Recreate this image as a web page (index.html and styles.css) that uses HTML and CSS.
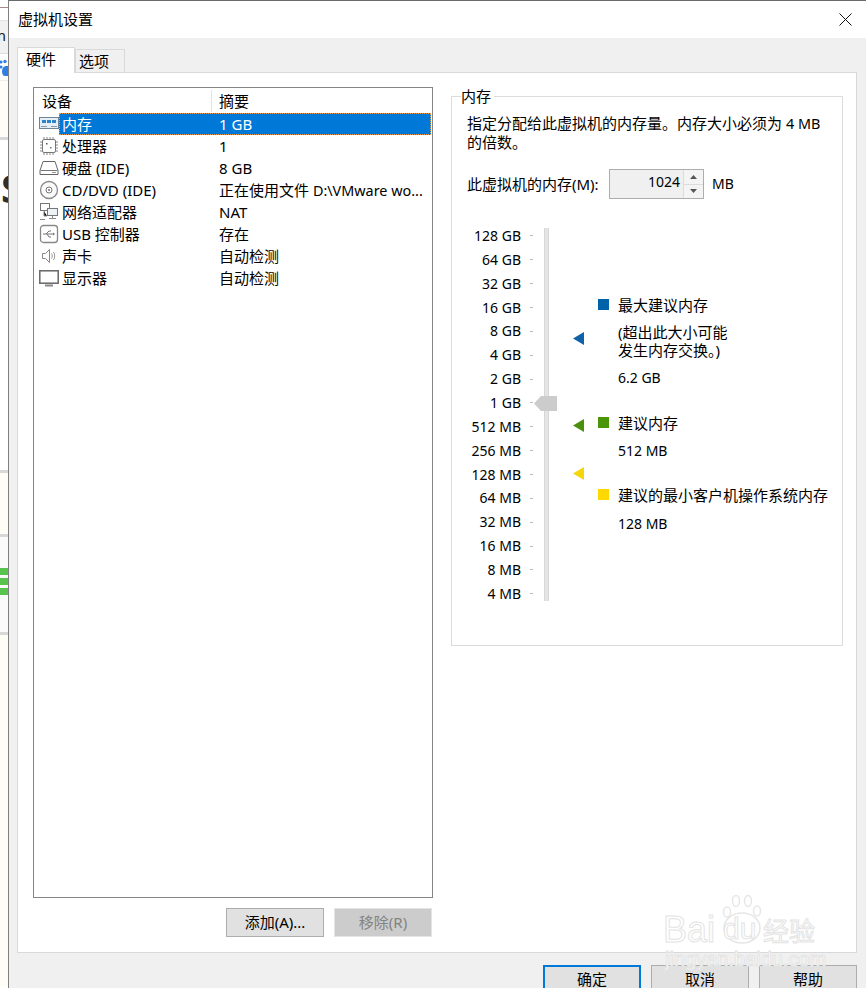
FILE: index.html
```html
<!DOCTYPE html>
<html lang="zh-CN">
<head>
<meta charset="utf-8">
<title>虚拟机设置</title>
<link rel="stylesheet" href="styles.css">
</head>
<body>
<div class="strip">
  <div class="s s-top"></div>
  <div class="s s-bar"><span class="frag-m">m</span></div>
  <div class="s s-paw"><svg width="8" height="18" viewBox="0 0 8 18"><g fill="#2f7fe0"><circle cx="1" cy="3" r="1.6"/><circle cx="5" cy="2.5" r="1.7"/><circle cx="1" cy="8" r="1.6"/><path d="M2 12c0-3 2-5 4-5h2v10H5c-2 0-3-2-3-5z"/></g></svg></div>
  <div class="s s-cream1"></div>
  <div class="s s-white1"><span class="frag-s">S</span></div>
  <div class="s s-cream2"></div>
  <div class="s s-white2"></div>
  <div class="s s-green"><i></i><i></i><i></i></div>
  <div class="s s-white3"></div>
  <div class="s s-cream3"></div>
</div>

<div class="dialog">
  <header class="titlebar">
    <span class="title">虚拟机设置</span>
    <svg class="close" width="13" height="13" viewBox="0 0 13 13"><path d="M.5.5l12 12M12.5.5l-12 12" stroke="#111" fill="none"/></svg>
  </header>

  <main class="body">
    <nav class="tabs">
      <div class="tab tab-on">硬件</div>
      <div class="tab">选项</div>
    </nav>

    <section class="panel">
      <div class="left">
        <div class="listbox">
          <div class="list-head">
            <div class="lh lh-a">设备</div>
            <div class="lh lh-b">摘要</div>
          </div>
          <div class="row row-sel">
            <svg class="ico" viewBox="0 0 20 20"><rect x=".5" y="3.5" width="19" height="11" fill="#e4eef6" stroke="#6f8394"/><rect x="3" y="6" width="4" height="3" fill="#2f83c9"/><rect x="8" y="6" width="4" height="3" fill="#2f83c9"/><rect x="13" y="6" width="4" height="3" fill="#2f83c9"/><path d="M2 12.5h6M12 12.5h6" stroke="#8b9aa6"/></svg>
            <span class="name">内存</span><span class="val">1 GB</span>
          </div>
          <div class="row">
            <svg class="ico" viewBox="0 0 20 20"><rect x="3.5" y="3.5" width="13" height="13" rx="1.5" fill="#fff" stroke="#777"/><path d="M5 1v2M8 1v2M11 1v2M14 1v2M5 17v2M8 17v2M11 17v2M14 17v2M1 6h2M1 9h2M1 12h2M1 15h2M17 6h2M17 9h2M17 12h2M17 15h2" stroke="#888"/><rect x="7" y="7" width="1.5" height="1.5" fill="#555"/><rect x="11" y="11" width="1.5" height="1.5" fill="#777"/></svg>
            <span class="name">处理器</span><span class="val">1</span>
          </div>
          <div class="row">
            <svg class="ico" viewBox="0 0 20 20"><path d="M4 3.5h12l3 9v4H1v-4z" fill="#fff" stroke="#666"/><path d="M1.500 12.500h17" stroke="#777"/><path d="M13 14.500h4" stroke="#999"/></svg>
            <span class="name">硬盘 (IDE)</span><span class="val">8 GB</span>
          </div>
          <div class="row">
            <svg class="ico" viewBox="0 0 20 20"><circle cx="10" cy="10" r="8.500" fill="#fafafa" stroke="#888" stroke-width="1.300"/><circle cx="10" cy="10" r="3" fill="#fff" stroke="#777"/><circle cx="10" cy="10" r="1" fill="#777"/></svg>
            <span class="name">CD/DVD (IDE)</span><span class="val">正在使用文件 <span class="lat">D:\VMware wo...</span></span>
          </div>
          <div class="row">
            <svg class="ico" viewBox="0 0 20 20"><rect x="1.500" y="1.500" width="9" height="7" fill="#fff" stroke="#777"/><rect x="8.500" y="6.500" width="10" height="7" fill="#eef2f5" stroke="#777"/><path d="M13.500 14v2M10 16.500h7M5 9v5h3M1 17.500h5" stroke="#888"/></svg>
            <span class="name">网络适配器</span><span class="val">NAT</span>
          </div>
          <div class="row">
            <svg class="ico" viewBox="0 0 20 20"><rect x="1.500" y="1.500" width="17" height="17" rx="3" fill="#fff" stroke="#888" stroke-width="1.300"/><path d="M4 10h11M7 10l3-3h2M8 10l2 3h2" stroke="#777" fill="none"/><path d="M16 10l-2-1.500v3z" fill="#777"/></svg>
            <span class="name">USB 控制器</span><span class="val">存在</span>
          </div>
          <div class="row">
            <svg class="ico" viewBox="0 0 20 20"><path d="M3.500 7.500h3l4-4v13l-4-4h-3z" fill="#fff" stroke="#888"/><path d="M12.500 7.500c1 1.500 1 3.500 0 5M14.500 6c1.600 2.500 1.600 5.500 0 8" stroke="#999" fill="none"/></svg>
            <span class="name">声卡</span><span class="val">自动检测</span>
          </div>
          <div class="row">
            <svg class="ico" viewBox="0 0 20 20"><rect x=".8" y="2.800" width="18.400" height="12.400" fill="#fff" stroke="#666" stroke-width="1.500"/><path d="M6 17.500h8" stroke="#888" stroke-width="2"/></svg>
            <span class="name">显示器</span><span class="val">自动检测</span>
          </div>
        </div>
        <div class="list-actions">
          <button class="btn">添加(A)...</button>
          <button class="btn btn-off">移除(R)</button>
        </div>
      </div>

      <fieldset class="group">
        <legend class="group-title">内存</legend>
        <p class="desc">指定分配给此虚拟机的内存量。内存大小必须为 <span class="lat">4 MB</span><br>的倍数。</p>
        <div class="mem-line">
          <label class="mem-label">此虚拟机的内存(M):</label>
          <div class="spin">
            <span class="spin-val">1024</span>
            <span class="spin-btns">
              <span class="spin-btn"><svg width="7" height="4" viewBox="0 0 7 4"><path d="M3.500 0L7 4H0z" fill="#555"/></svg></span>
              <span class="spin-btn"><svg width="7" height="4" viewBox="0 0 7 4"><path d="M3.500 4L7 0H0z" fill="#555"/></svg></span>
            </span>
          </div>
          <span class="mem-unit">MB</span>
        </div>
        <div class="scale">
          <div class="ticks">
            <div class="tick"><span>128 GB</span><i></i></div>
            <div class="tick"><span>64 GB</span><i></i></div>
            <div class="tick"><span>32 GB</span><i></i></div>
            <div class="tick"><span>16 GB</span><i></i></div>
            <div class="tick"><span>8 GB</span><i></i></div>
            <div class="tick"><span>4 GB</span><i></i></div>
            <div class="tick"><span>2 GB</span><i></i></div>
            <div class="tick"><span>1 GB</span><i></i></div>
            <div class="tick"><span>512 MB</span><i></i></div>
            <div class="tick"><span>256 MB</span><i></i></div>
            <div class="tick"><span>128 MB</span><i></i></div>
            <div class="tick"><span>64 MB</span><i></i></div>
            <div class="tick"><span>32 MB</span><i></i></div>
            <div class="tick"><span>16 MB</span><i></i></div>
            <div class="tick"><span>8 MB</span><i></i></div>
            <div class="tick"><span>4 MB</span><i></i></div>
          </div>
          <div class="slider">
            <div class="track"></div>
            <svg class="thumb" width="23" height="15" viewBox="0 0 23 15"><path d="M0 7.500L7 0h16v15H7z" fill="#cccccc"/></svg>
            <svg class="mark mark-blue" width="11" height="13" viewBox="0 0 11 13"><path d="M0 6.500L11 0v13z" fill="#0f62a8"/></svg>
            <svg class="mark mark-green" width="11" height="13" viewBox="0 0 11 13"><path d="M0 6.500L11 0v13z" fill="#4a9110"/></svg>
            <svg class="mark mark-yellow" width="11" height="13" viewBox="0 0 11 13"><path d="M0 6.500L11 0v13z" fill="#f5d60c"/></svg>
          </div>
          <div class="legend">
            <div class="leg leg-max">
              <i class="sw sw-blue"></i>
              <div class="leg-text">
                <p class="lg-h">最大建议内存</p>
                <p class="lg-n">(超出此大小可能<br>发生内存交换。)</p>
                <p class="lg-v">6.2 GB</p>
              </div>
            </div>
            <div class="leg leg-rec">
              <i class="sw sw-green"></i>
              <div class="leg-text">
                <p class="lg-h">建议内存</p>
                <p class="lg-v">512 MB</p>
              </div>
            </div>
            <div class="leg leg-min">
              <i class="sw sw-yellow"></i>
              <div class="leg-text">
                <p class="lg-h">建议的最小客户机操作系统内存</p>
                <p class="lg-v">128 MB</p>
              </div>
            </div>
          </div>
        </div>
      </fieldset>
    </section>

    <footer class="foot">
      <button class="btn btn-main">确定</button>
      <button class="btn">取消</button>
      <button class="btn">帮助</button>
    </footer>
  </main>
</div>

<div class="wm">
  <svg class="wm-paw" width="40" height="50" viewBox="0 0 40 50"><g fill="#fff" stroke="#e6e6e6" stroke-width="1.500"><ellipse cx="5" cy="17" rx="3.500" ry="5"/><ellipse cx="14" cy="6" rx="3.500" ry="5.500"/><ellipse cx="26" cy="6" rx="3.500" ry="5.500"/><ellipse cx="35" cy="16" rx="3.500" ry="5"/><ellipse cx="20" cy="33" rx="18" ry="15"/></g></svg>
  <span class="wm-bai">Bai</span>
  <span class="wm-du">du</span>
  <span class="wm-jy">经验</span>
  <span class="wm-url">jingyan.baidu.com</span>
</div>
</body>
</html>
```

FILE: styles.css
```css
* { box-sizing: border-box; }
html, body { margin: 0; height: 988px; overflow: hidden; }
body {
  position: relative;
  display: flex;
  width: 866px;
  background: #fff;
  color: #000;
  font: 15px/18px "Noto Sans", "Noto Sans CJK SC", sans-serif;
}
p { margin: 0; }
i { display: block; }
.lat { font-size: 14.4px; }

/* window behind the dialog */
.strip { width: 8px; flex: none; overflow: hidden; display: flex; flex-direction: column; }
.s { flex: none; position: relative; overflow: hidden; }
.s-top { height: 21px; background: linear-gradient(#fff 7px, #a88 7px, #a88 8px, #fff 8px); border-bottom: 1px solid #e3e3e3; }
.s-bar { height: 33px; background: #f1f1f1; border-bottom: 1px solid #ddd; }
.frag-m { position: absolute; left: -8px; top: 5px; font-size: 15px; color: #222; }
.s-paw { height: 27px; background: #fff; padding-top: 5px; border-bottom: 1px solid #eee; }
.s-paw svg { display: block; }
.s-cream1 { height: 59px; background: #fffef6; border-bottom: 3px solid #d8d8d8; }
.s-white1 { height: 330px; background: #fff; }
.frag-s { position: absolute; left: 1px; top: 23px; font: 700 40px/50px "Noto Sans", sans-serif; color: #2e2e2e; }
.s-cream2 { height: 67px; background: #fffef6; border-top: 3px solid #d8d8d8; border-bottom: 3px solid #d8d8d8; }
.s-white2 { height: 31px; background: #fbfbfb; }
.s-green { height: 29px; background: #fbfbfb; display: flex; flex-direction: column; gap: 3px; }
.s-green i { height: 7px; background: #58c44f; }
.s-white3 { height: 38px; background: #fbfbfb; border-bottom: 3px solid #d8d8d8; }
.s-cream3 { height: 352px; background: #fffef6; }

/* dialog frame */
.dialog {
  flex: 1;
  min-width: 0;
  display: flex;
  flex-direction: column;
  border-left: 1px solid #7f7f7f;
  border-top: 1px solid #6a6a6a;
}
.titlebar {
  height: 37px;
  flex: none;
  display: flex;
  align-items: center;
  justify-content: space-between;
  padding: 0 14px 2px 9px;
  background: #fff;
}
.close { display: block; margin-top: 2px; }

.body { flex: 1; background: #f0f0f0; padding: 9px 9px 0 8px; }

/* tabs */
.tabs { display: flex; align-items: flex-end; height: 26px; position: relative; z-index: 1; }
.tab {
  width: 50px;
  height: 23px;
  margin-bottom: 1px;
  padding-left: 3px;
  border: 1px solid #d9d9d9;
  border-bottom: 0;
  line-height: 23px;
  background: #f0f0f0;
}
.tab-on {
  width: 58px;
  height: 26px;
  margin-bottom: 0;
  padding-left: 8px;
  line-height: 23px;
  background: #fff;
  border-right: 1px solid #d9d9d9;
}

/* panel */
.panel {
  height: 881px;
  margin-top: -1px;
  display: flex;
  gap: 18px;
  padding: 14px 13px 0 15px;
  background: #fff;
  border: 1px solid #d9d9d9;
}
.left { width: 400px; flex: none; }
.listbox {
  height: 811px;
  border: 1px solid #858585;
  background: #fff;
}
.list-head { display: flex; height: 25px; }
.lh-a { width: 178px; height: 22px; margin-top: 2px; padding-left: 8px; border-right: 1px solid #e3e3e3; line-height: 22px; }
.lh-b { margin-top: 2px; padding-left: 7px; line-height: 22px; }
.row { display: flex; height: 22px; align-items: center; padding-left: 5px; line-height: 22px; white-space: nowrap; }
.ico { width: 20px; height: 20px; flex: none; }
.name { width: 160px; flex: none; padding-left: 3px; }
.val { flex: 1; }
.row-sel { position: relative; }
.row-sel::before {
  content: "";
  position: absolute;
  left: 25px;
  right: 1px;
  top: 0;
  bottom: 0;
  background: #0078d7;
  border: 1px dotted #e59a4e;
}
.row-sel .name, .row-sel .val { position: relative; color: #fff; }

.list-actions { display: flex; justify-content: flex-end; gap: 10px; margin-top: 10px; padding-right: 1px; }

/* buttons */
.btn {
  width: 98px;
  height: 29px;
  padding: 0 0 2px;
  border: 1px solid #adadad;
  background: #e1e1e1;
  color: #000;
  font: inherit;
  line-height: 24px;
}
.btn-off { background: #cccccc; border-color: #e4e4e4; color: #838383; }
.btn-main { border: 2px solid #0078d7; }

/* group */
.group {
  width: 392px;
  height: 559px;
  flex: none;
  margin: 0;
  padding: 0 0 0 15px;
  border: 1px solid #dcdcdc;
  min-width: 0;
}
.group-title { padding: 0 3px 0 0; margin-left: -6px; height: 19px; line-height: 19px; }
.desc { margin-top: 8px; line-height: 18px; white-space: nowrap; }
.mem-line { display: flex; align-items: center; height: 30px; margin-top: 18px; }
.mem-label { width: 142px; flex: none; white-space: nowrap; }
.spin {
  width: 95px;
  height: 30px;
  display: flex;
  border: 1px solid #adadad;
  background: #f0f0f0;
}
.spin-val { flex: 1; text-align: right; padding-right: 3px; font-size: 14px; line-height: 24px; }
.spin-btns { width: 20px; display: flex; flex-direction: column; border-left: 1px solid #dcdcdc; background: #f4f4f4; }
.spin-btn { flex: 1; display: flex; align-items: center; justify-content: center; border-bottom: 1px solid #dcdcdc; }
.spin-btn:last-child { border-bottom: 0; }
.spin-btn svg { display: block; }
.mem-unit { margin-left: 8px; font-size: 14px; }

/* memory scale */
.scale { display: flex; margin-top: 29px; }
.ticks { width: 66px; flex: none; margin-top: -4px; }
.tick {
  height: 23.87px;
  display: flex;
  align-items: center;
  justify-content: flex-end;
  gap: 9px;
  font-size: 14px;
  white-space: nowrap;
}
.tick i { width: 3px; height: 1px; background: #bbb; flex: none; }
.slider { width: 65px; flex: none; height: 373px; position: relative; }
.track { width: 5px; height: 373px; margin-left: 11px; background: #e3e6e6; border-left: 1px solid #d7d7d7; border-right: 1px solid #d7d7d7; }
.thumb, .mark { position: absolute; display: block; }
.thumb { left: 1px; top: 168px; }
.mark { left: 40px; }
.mark-blue { top: 104px; }
.mark-green { top: 191px; }
.mark-yellow { top: 239px; }

.legend { flex: 1; padding-top: 68px; }
.leg { display: flex; gap: 9px; }
.sw { width: 11px; height: 11px; flex: none; margin-top: 3px; }
.sw-blue { background: #0062a9; }
.sw-green { background: #4a9508; }
.sw-yellow { background: #ffd800; }
.lg-h { line-height: 18px; white-space: nowrap; }
.lg-n { margin-top: 9px; line-height: 18px; white-space: nowrap; }
.lg-v { margin-top: 10px; font-size: 14px; line-height: 18px; }
.leg-rec { margin-top: 27px; }
.leg-min { margin-top: 26px; }
.leg-min .lg-v { margin-top: 11px; }

/* footer */
.foot { display: flex; justify-content: flex-end; gap: 10px; margin-top: 12px; }

/* watermark */
.wm { position: absolute; left: 660px; top: 895px; width: 170px; height: 80px; pointer-events: none; }
.wm span { position: absolute; color: #fff; -webkit-text-stroke: 1px #e4e4e4; font-family: "Liberation Sans", sans-serif; white-space: nowrap; }
.wm-paw { position: absolute; left: 62px; top: 0; }
.wm-bai { left: 3px; top: 17px; font-size: 36px; line-height: 36px; }
.wm-du { left: 63px; top: 19px; font-size: 30px; line-height: 30px; }
.wm span.wm-jy { left: 103px; top: 20px; font-size: 26px; line-height: 30px; font-family: "Noto Sans CJK SC", sans-serif; }
.wm-url { left: 5px; top: 53px; font-size: 20px; line-height: 22px; }
```
